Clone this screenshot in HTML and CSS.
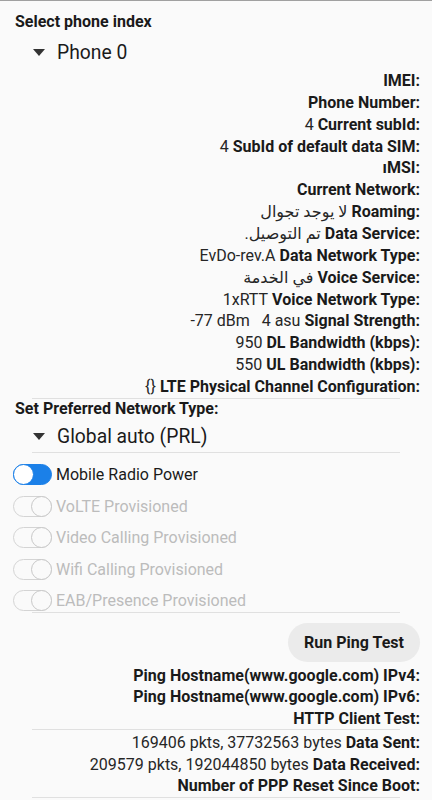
FILE: index.html
```html
<!DOCTYPE html>
<html lang="en">
<head>
<meta charset="utf-8">
<title>Phone info</title>
<link rel="stylesheet" href="styles.css">
</head>
<body>
<div class="page">
  <div class="section-title">Select phone index</div>
  <div class="spinner"><span class="caret"></span><span class="spinner-text">Phone 0</span></div>

  <div class="info first">
    <div class="row"><span class="label">IMEI:</span></div>
    <div class="row"><span class="label">Phone Number:</span></div>
    <div class="row"><span class="value">4</span><span class="label">Current subId:</span></div>
    <div class="row"><span class="value">4</span><span class="label">SubId of default data SIM:</span></div>
    <div class="row"><span class="label">ıMSI:</span></div>
    <div class="row"><span class="label">Current Network:</span></div>
    <div class="row"><span class="value" dir="rtl">لا يوجد تجوال</span><span class="label">Roaming:</span></div>
    <div class="row"><span class="value" dir="rtl">تم التوصيل.</span><span class="label">Data Service:</span></div>
    <div class="row"><span class="value">EvDo-rev.A</span><span class="label">Data Network Type:</span></div>
    <div class="row"><span class="value" dir="rtl">في الخدمة</span><span class="label">Voice Service:</span></div>
    <div class="row"><span class="value">1xRTT</span><span class="label">Voice Network Type:</span></div>
    <div class="row"><span class="value">-77 dBm&nbsp;&nbsp;&nbsp;4 asu</span><span class="label">Signal Strength:</span></div>
    <div class="row"><span class="value">950</span><span class="label">DL Bandwidth (kbps):</span></div>
    <div class="row"><span class="value">550</span><span class="label">UL Bandwidth (kbps):</span></div>
    <div class="row"><span class="value">{}</span><span class="label">LTE Physical Channel Configuration:</span></div>
  </div>
  <div class="divider"></div>

  <div class="section-title second">Set Preferred Network Type:</div>
  <div class="spinner"><span class="caret"></span><span class="spinner-text">Global auto (PRL)</span></div>
  <div class="divider"></div>

  <div class="switches">
    <div class="sw-row"><span class="switch on"><span class="thumb"></span></span><span class="sw-text">Mobile Radio Power</span></div>
    <div class="sw-row disabled"><span class="switch"><span class="thumb"></span></span><span class="sw-text">VoLTE Provisioned</span></div>
    <div class="sw-row disabled"><span class="switch"><span class="thumb"></span></span><span class="sw-text">Video Calling Provisioned</span></div>
    <div class="sw-row disabled"><span class="switch"><span class="thumb"></span></span><span class="sw-text">Wifi Calling Provisioned</span></div>
    <div class="sw-row disabled"><span class="switch"><span class="thumb"></span></span><span class="sw-text">EAB/Presence Provisioned</span></div>
  </div>
  <div class="divider"></div>

  <div class="btn-row"><button class="ping-btn">Run Ping Test</button></div>

  <div class="info tight">
    <div class="row"><span class="label">Ping Hostname(www.google.com) IPv4:</span></div>
    <div class="row"><span class="label">Ping Hostname(www.google.com) IPv6:</span></div>
    <div class="row"><span class="label">HTTP Client Test:</span></div>
  </div>
  <div class="divider"></div>
  <div class="info tight">
    <div class="row"><span class="value">169406 pkts, 37732563 bytes</span><span class="label">Data Sent:</span></div>
    <div class="row"><span class="value">209579 pkts, 192044850 bytes</span><span class="label">Data Received:</span></div>
    <div class="row"><span class="label">Number of PPP Reset Since Boot:</span></div>
  </div>
  <div class="divider"></div>
</div>
</body>
</html>
```
FILE: styles.css
```css
* { box-sizing: border-box; }
html, body {
  margin: 0;
  padding: 0;
  background: #fafafa;
}
body {
  font-family: Roboto, "Noto Sans", "DejaVu Sans", sans-serif;
  color: #1c1c1c;
  border-top: 1px solid #a0a0a0;
  overflow: hidden;
  height: 800px;
}
.page {
  display: flex;
  flex-direction: column;
}
.section-title {
  font-weight: 700;
  font-size: 16px;
  line-height: 20px;
  padding-left: 15px;
  margin-top: 11px;
  color: #1a1a1a;
}
.section-title.second {
  margin-top: 0;
}
.spinner {
  display: flex;
  align-items: center;
  height: 30px;
  padding-left: 33px;
  margin-top: 5px;
  margin-right: 32px;
}
.section-title.second + .spinner {
  margin-top: 3px;
}
.caret {
  width: 0;
  height: 0;
  border-left: 6px solid transparent;
  border-right: 6px solid transparent;
  border-top: 7px solid #333;
  margin-right: 12px;
}
.spinner-text {
  font-size: 19.3px;
  color: #1a1a1a;
}
.info {
  display: flex;
  flex-direction: column;
  padding-right: 12px;
}
.info.first {
  margin-top: 3px;
}
.row {
  display: flex;
  justify-content: flex-end;
  align-items: center;
  gap: 4px;
  line-height: 21.86px;
  white-space: nowrap;
}
.info.tight .row {
  line-height: 21.5px;
}
.info.tight {
  margin-top: 3px;
}
.divider + .info.tight {
  margin-top: 2px;
}
.label {
  font-weight: 700;
  font-size: 16px;
  color: #1a1a1a;
}
.value {
  font-size: 16px;
  color: #262626;
}
.divider {
  height: 1px;
  background: #e0e0e0;
  margin-left: 32px;
  margin-right: 32px;
}
.switches {
  display: flex;
  flex-direction: column;
  gap: 9.5px;
  margin-top: 11px;
  padding-left: 13px;
}
.sw-row {
  display: flex;
  align-items: center;
  height: 22px;
  gap: 4px;
}
.sw-text {
  font-size: 16px;
  color: #1a1a1a;
}
.sw-row.disabled .sw-text {
  color: #bcbcbc;
}
.switch {
  position: relative;
  width: 39px;
  height: 21px;
  border-radius: 11px;
  border: 1px solid #d4d4d4;
  flex: none;
}
.switch .thumb {
  position: absolute;
  top: -1px;
  right: -1px;
  width: 21px;
  height: 21px;
  border-radius: 50%;
  border: 1px solid #c8c8c8;
  background: #fafafa;
}
.switch.on {
  background: #1b80e8;
  border-color: #1b80e8;
}
.switch.on .thumb {
  right: auto;
  left: -1px;
  background: #ffffff;
  border: 1.5px solid #1b80e8;
}
.btn-row {
  display: flex;
  justify-content: flex-end;
  padding-right: 12px;
  margin-top: 10px;
}
.ping-btn {
  font-family: Roboto, "Noto Sans", sans-serif;
  font-weight: 700;
  font-size: 16px;
  color: #1a1a1a;
  background: #ebebeb;
  border: none;
  border-radius: 20px;
  width: 132px;
  height: 39px;
  padding: 0;
}
```
